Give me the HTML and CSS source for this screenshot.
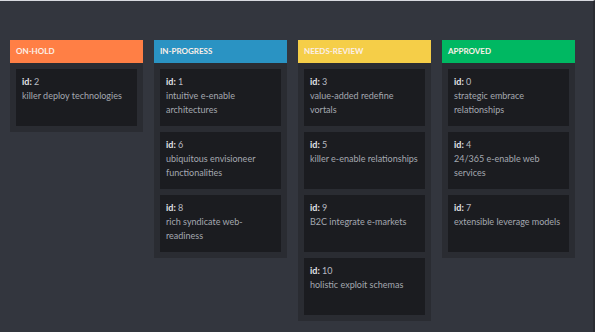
FILE: index.html
```html
<!DOCTYPE html>
<html lang="en">
<head>
    <meta charset="UTF-8">
    <meta name="viewport" content="width=device-width, initial-scale=1.0">
    <title>Kanban Board</title>
    <link rel="stylesheet" href="styles.css">
</head>
<body>
    <div class="board">
        <div class="lane">
            <div class="lane-header on-hold">On-hold</div>
            <div class="lane-cards">
                <div class="card">
                    <div class="card-id"><b>id:</b> 2</div>
                    <div class="card-text">killer deploy technologies</div>
                </div>
            </div>
        </div>
        <div class="lane">
            <div class="lane-header in-progress">In-progress</div>
            <div class="lane-cards">
                <div class="card">
                    <div class="card-id"><b>id:</b> 1</div>
                    <div class="card-text">intuitive e-enable architectures</div>
                </div>
                <div class="card">
                    <div class="card-id"><b>id:</b> 6</div>
                    <div class="card-text">ubiquitous envisioneer functionalities</div>
                </div>
                <div class="card">
                    <div class="card-id"><b>id:</b> 8</div>
                    <div class="card-text">rich syndicate web-readiness</div>
                </div>
            </div>
        </div>
        <div class="lane">
            <div class="lane-header needs-review">Needs-review</div>
            <div class="lane-cards">
                <div class="card">
                    <div class="card-id"><b>id:</b> 3</div>
                    <div class="card-text">value-added redefine vortals</div>
                </div>
                <div class="card">
                    <div class="card-id"><b>id:</b> 5</div>
                    <div class="card-text">killer e-enable relationships</div>
                </div>
                <div class="card">
                    <div class="card-id"><b>id:</b> 9</div>
                    <div class="card-text">B2C integrate e-markets</div>
                </div>
                <div class="card">
                    <div class="card-id"><b>id:</b> 10</div>
                    <div class="card-text">holistic exploit schemas</div>
                </div>
            </div>
        </div>
        <div class="lane">
            <div class="lane-header approved">Approved</div>
            <div class="lane-cards">
                <div class="card">
                    <div class="card-id"><b>id:</b> 0</div>
                    <div class="card-text">strategic embrace relationships</div>
                </div>
                <div class="card">
                    <div class="card-id"><b>id:</b> 4</div>
                    <div class="card-text">24/365 e-enable web services</div>
                </div>
                <div class="card">
                    <div class="card-id"><b>id:</b> 7</div>
                    <div class="card-text">extensible leverage models</div>
                </div>
            </div>
        </div>
    </div>
</body>
</html>
```

FILE: styles.css
```css
* {
    margin: 0;
    padding: 0;
    box-sizing: border-box;
}

html, body {
    height: 100%;
}

body {
    font-family: Lato, "Open Sans", sans-serif;
    background-color: #33363e;
    border-top: 1px solid #d8dadf;
    border-right: 2px solid #2a2c32;
}

.board {
    display: flex;
    align-items: flex-start;
    gap: 11px;
    padding: 39px 10px 0 10px;
}

.lane {
    width: 133px;
    background-color: #2a2c32;
}

.lane-header {
    height: 23px;
    line-height: 23px;
    padding-left: 6px;
    font-size: 8px;
    font-weight: bold;
    text-transform: uppercase;
    color: #fbefe8;
}

.lane-header.on-hold      { background-color: #ff7f45; }
.lane-header.in-progress  { background-color: #2a93c3; }
.lane-header.needs-review { background-color: #f5ce48; }
.lane-header.approved     { background-color: #00b862; }

.lane-cards {
    display: flex;
    flex-direction: column;
    gap: 6px;
    padding: 6px;
}

.card {
    height: 57px;
    background-color: #1b1c20;
    padding: 6px 6px;
    font-size: 9px;
    line-height: 14px;
}

.card-id {
    color: #b7bac0;
}

.card-id b {
    color: #e2e4e8;
}

.card-text {
    color: #a4a8b0;
}
```
